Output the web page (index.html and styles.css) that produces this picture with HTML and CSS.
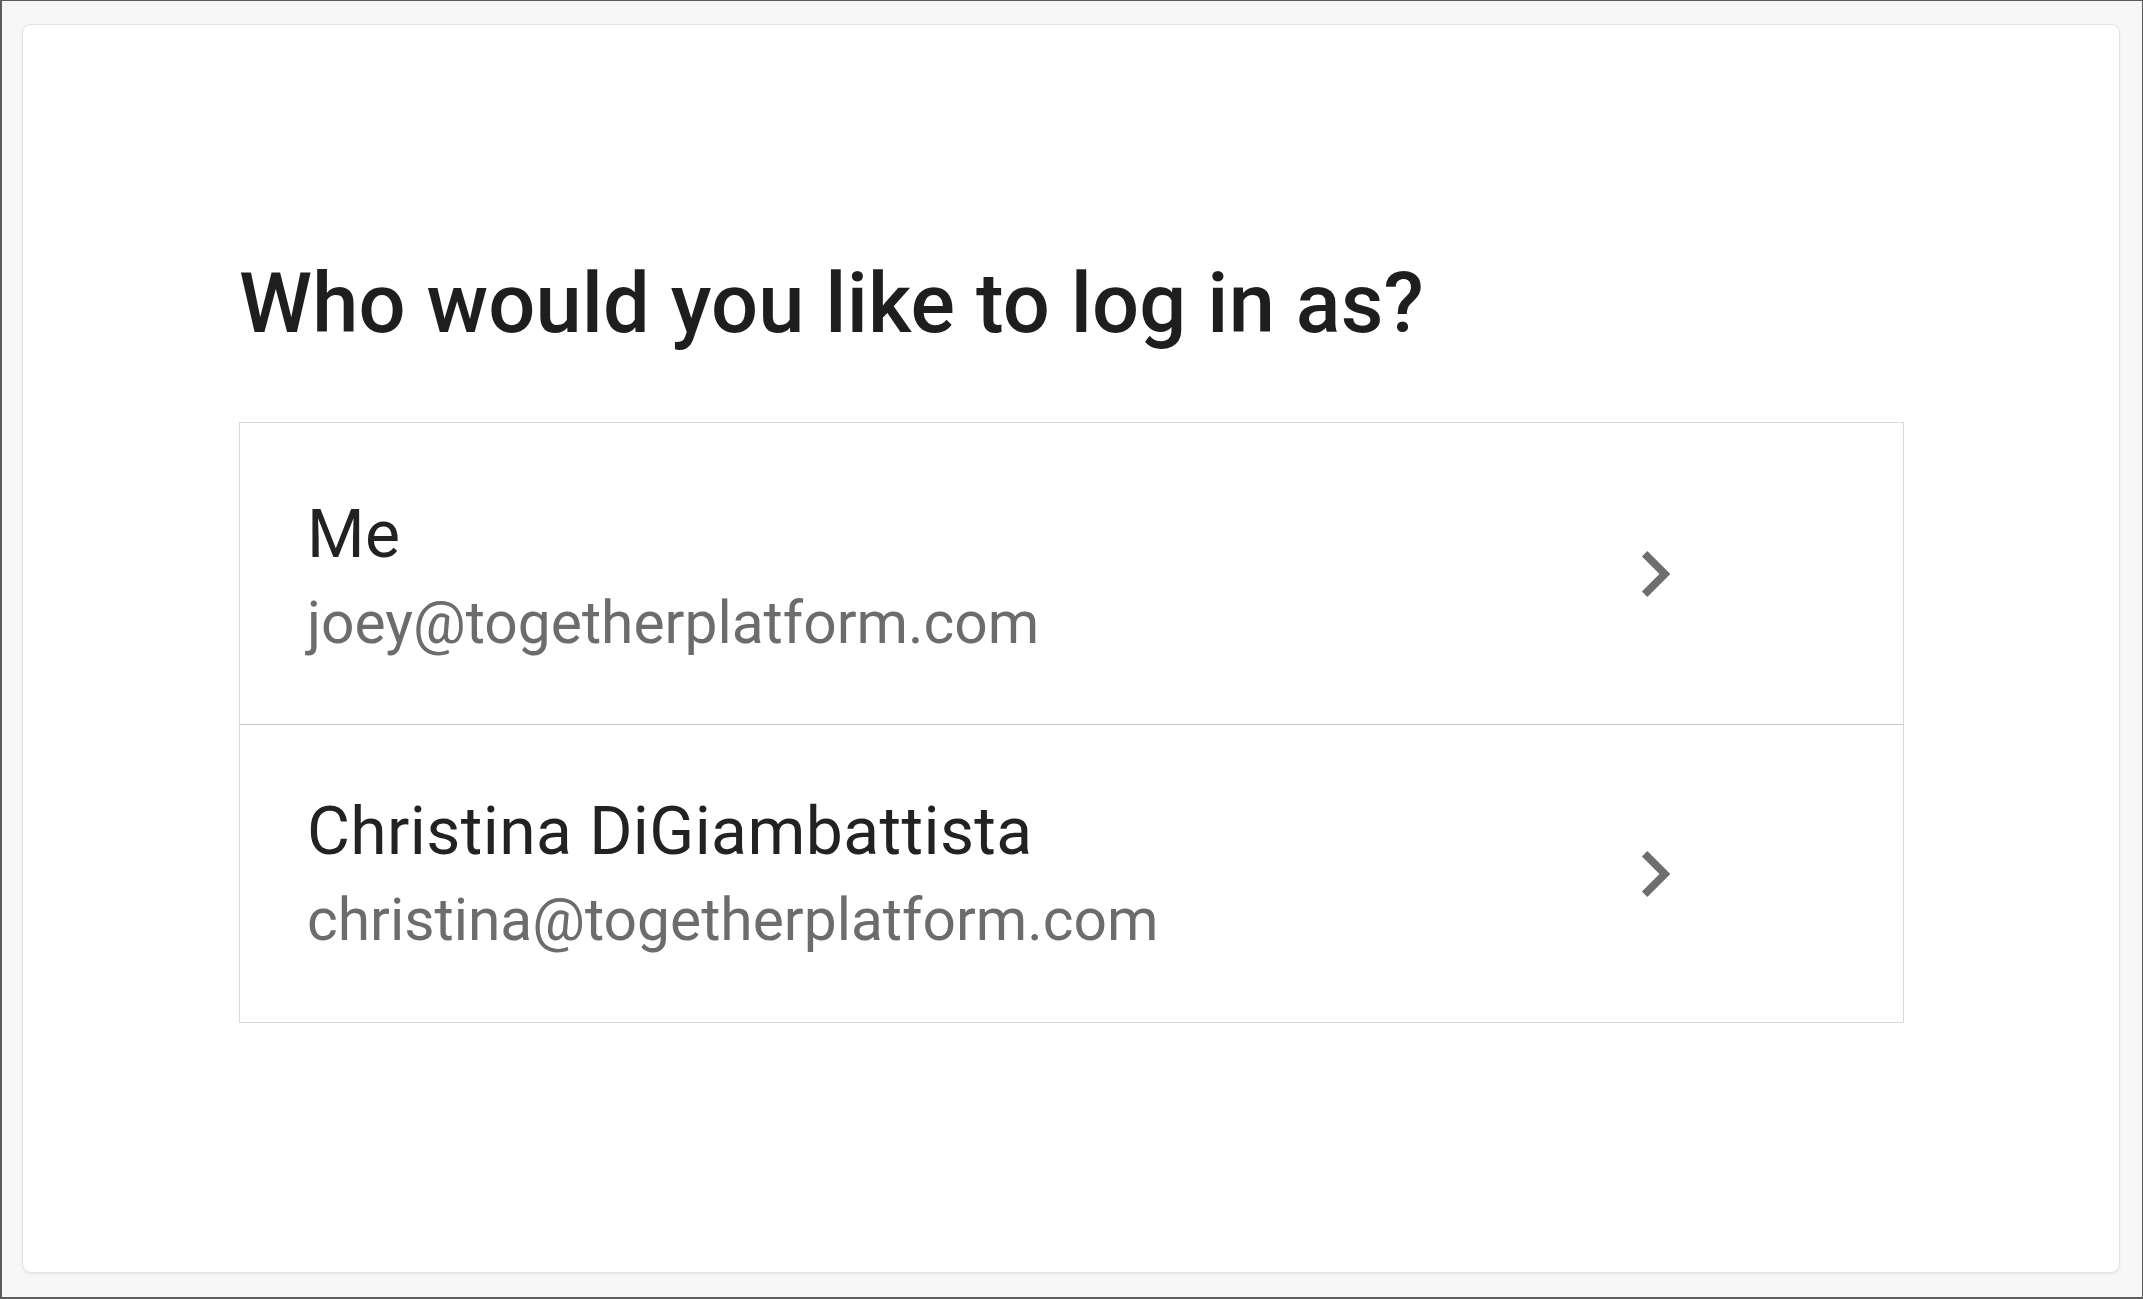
FILE: index.html
```html
<!DOCTYPE html>
<html lang="en">
<head>
<meta charset="utf-8">
<title>Who would you like to log in as?</title>
<link rel="stylesheet" href="styles.css">
</head>
<body>
<div class="frame">
  <main class="card">
    <h1 class="title">Who would you like to log in as?</h1>
    <ul class="accounts">
      <li class="account">
        <div class="account-text">
          <div class="account-name">Me</div>
          <div class="account-email">joey@togetherplatform.com</div>
        </div>
        <svg class="chevron" viewBox="0 0 24 24" aria-hidden="true"><path d="M10 6L8.59 7.41 13.17 12l-4.58 4.59L10 18l6-6z"/></svg>
      </li>
      <li class="account">
        <div class="account-text">
          <div class="account-name">Christina DiGiambattista</div>
          <div class="account-email">christina@togetherplatform.com</div>
        </div>
        <svg class="chevron" viewBox="0 0 24 24" aria-hidden="true"><path d="M10 6L8.59 7.41 13.17 12l-4.58 4.59L10 18l6-6z"/></svg>
      </li>
    </ul>
  </main>
</div>
</body>
</html>
```

FILE: styles.css
```css
html, body {
  margin: 0;
  padding: 0;
}
body {
  font-family: Roboto, "Liberation Sans", Arial, sans-serif;
  background: #f7f7f7;
}
.frame {
  box-sizing: border-box;
  width: 2143px;
  height: 1299px;
  border-style: solid;
  border-color: #5c5c5c;
  border-width: 1px 1px 2px 2px;
  padding: 24px 23px 25px 21px;
  display: flex;
}
.card {
  flex: 1;
  background: #ffffff;
  border-radius: 8px;
  box-shadow: 0 0 0 1px #e3e3e3, 0 2px 4px rgba(0, 0, 0, 0.08);
  padding: 237px 0 0 216px;
}
.title {
  margin: 0;
  font-size: 83px;
  line-height: 83px;
  font-weight: 500;
  color: #1e1e1e;
  letter-spacing: 0.15px;
}
.accounts {
  list-style: none;
  margin: 77px 0 0 0;
  padding: 0;
  width: 1665px;
  box-sizing: border-box;
  border: 1px solid #d9d9d9;
}
.account {
  display: flex;
  align-items: center;
  height: 301px;
  box-sizing: border-box;
  padding: 0 202px 0 67px;
}
.account + .account {
  border-top: 1px solid #c8c8c8;
  height: 298px;
}
.account-text {
  flex: 1;
  display: flex;
  flex-direction: column;
  gap: 15px;
  padding-top: 8px;
}
.account + .account .account-text {
  padding-top: 2px;
}
.account-name {
  font-size: 66px;
  line-height: 76px;
  letter-spacing: 0.4px;
  color: #222222;
}
.account-email {
  font-size: 58.7px;
  line-height: 70px;
  color: #6c6c6c;
}
.chevron {
  width: 92px;
  height: 92px;
  fill: #6e6e6e;
  flex: none;
}
```
